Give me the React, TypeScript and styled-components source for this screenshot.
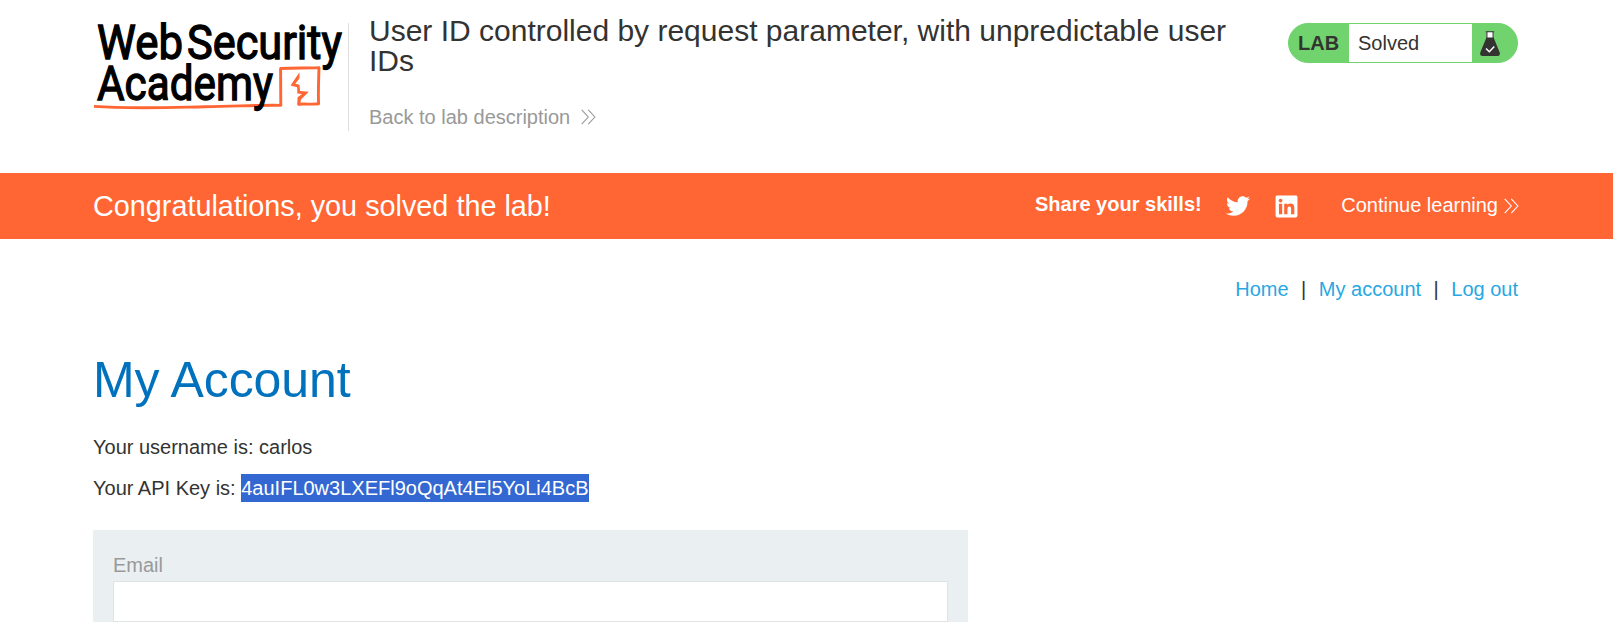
import React from "react";
import styled, { createGlobalStyle } from "styled-components";
import { FaTwitter, FaLinkedin } from "react-icons/fa";

const GlobalStyle = createGlobalStyle`
  * { box-sizing: border-box; }
  html, body { margin: 0; background: #fff; }
  body {
    font-family: "Liberation Sans", Arial, Helvetica, sans-serif;
    font-size: 20px;
    line-height: 23px;
    color: #333332;
    overflow: hidden;
  }
`;

const Page = styled.div`
  height: 622px;
  overflow: hidden;
`;

const Container = styled.div`
  width: 1425px;
  margin: 0 0 0 93px;
`;

const Header = styled(Container)`
  display: flex;
  align-items: flex-start;
  height: 173px;
  padding-top: 23px;
`;

const LogoLink = styled.a`
  display: block;
  width: 256px;
  height: 108px;
  border-right: 1px solid #dedede;
  svg { display: block; overflow: visible; }
`;

const TitleBlock = styled.div`
  width: 880px;
  padding-left: 20px;
`;

const Title = styled.h2`
  margin: -7px 0 0;
  font-size: 30px;
  line-height: 30px;
  font-weight: 400;
`;

const BackLink = styled.a`
  display: flex;
  align-items: center;
  gap: 11px;
  margin-top: 30px;
  color: #999;
  svg { margin-top: -2px; }
`;

const StatusBadge = styled.div`
  display: flex;
  width: 230px;
  height: 40px;
  margin-left: auto;
  border: 1px solid #71d36d;
  border-radius: 20px;
  background: #71d36d;
  overflow: hidden;
  line-height: 38px;
`;

const BadgeLabel = styled.span`
  width: 60px;
  padding-left: 9px;
  font-weight: 700;
  letter-spacing: 0.1px;
`;

const BadgeState = styled.span`
  width: 123px;
  padding-left: 9px;
  background: #fff;
`;

const BadgeIcon = styled.span`
  padding: 7px 0 0 8px;
  svg { display: block; }
`;

const Banner = styled.section`
  height: 66px;
  background: #ff6633;
  color: #fff;
`;

const BannerRow = styled(Container)`
  display: flex;
  align-items: center;
  height: 100%;
`;

const BannerTitle = styled.h4`
  margin: -1px auto 0 0;
  font-size: 28.8px;
  line-height: 32px;
  font-weight: 400;
`;

const Share = styled.div`
  display: flex;
  align-items: center;
  margin-right: 42.5px;
`;

const ShareText = styled.span`
  margin: -3px 24px 0 0;
  font-weight: 700;
`;

const ShareIcon = styled.a<{ $gap?: number }>`
  display: block;
  margin-right: ${(p) => p.$gap ?? 0}px;
  height: 25px;
  svg { display: block; }
`;

const ContinueLink = styled.a`
  display: flex;
  align-items: center;
  gap: 6px;
  margin: -1px -1px 0 0;
  color: #fff;
`;

const Nav = styled(Container)`
  display: flex;
  justify-content: flex-end;
  gap: 12.5px;
  padding-top: 39px;
  height: 111px;
`;

const NavLink = styled.a`
  color: #29a7e1;
`;

const PageTitle = styled.h1`
  margin: 0;
  font-size: 50px;
  line-height: 60px;
  font-weight: 400;
  letter-spacing: -0.1px;
  color: #0071bc;
`;

const Detail = styled.p`
  margin: 0 0 18px;
`;

const Details = styled.div`
  padding: 26px 0 12px;
`;

const Selected = styled.span`
  background: #3367d1;
  color: #fff;
  padding: 3px 0;
`;

const Form = styled.form`
  width: 875px;
  height: 140px;
  padding: 24px 20px 0;
  background: #eaeff2;
`;

const Label = styled.label`
  display: block;
  color: #999;
`;

const Input = styled.input`
  display: block;
  width: 835px;
  height: 41px;
  margin-top: 4px;
  border: 1px solid #e0e3e4;
  background: #fff;
  outline: none;
`;

const Chevrons = () => (
  <svg width="15" height="16" viewBox="0 0 15 16" fill="none" stroke="currentColor" strokeWidth="1.1">
    <path d="M.7.9 7.3 8 .7 15.1M7.3.9 13.9 8 7.3 15.1" />
  </svg>
);

const Logo = () => (
  <svg width="255" height="90" viewBox="93 23 255 90">
    <g
      fill="#000" stroke="#000" strokeWidth="1.3"
      fontFamily="Roboto, sans-serif" fontWeight="400" fontSize="47.4"
    >
      <text x="97" y="58.9" textLength="86" lengthAdjust="spacingAndGlyphs">Web</text>
      <text x="187" y="58.9" textLength="155" lengthAdjust="spacingAndGlyphs">Security</text>
    </g>
    <path
      d="M94 106.4C130 108.9 168 107.5 205 106.8S262 104.9 280.8 105.4L280.6 68.5C294 67.5 306 68.4 319 67.6 318.7 80 318 92 318.6 103.8 312 104.8 305 103.4 298 104.3"
      fill="none" stroke="#ff6633" strokeWidth="2.9" strokeLinejoin="round"
    />
    <path
      d="M299.5 72.2 299.4 78.5 295.3 83.8 299.5 84.8 300 91 308.8 91.8 301 99.5 300 105.2H297.2L297.6 97.2 302 94 297.3 93.6 297.2 87.2 290.5 85.4Z"
      fill="#ff6633"
    />
    <text x="97" y="99.8" textLength="176" lengthAdjust="spacingAndGlyphs"
      fill="#000" stroke="#000" strokeWidth="1.3"
      fontFamily="Roboto, sans-serif" fontWeight="400" fontSize="47.4">Academy</text>
  </svg>
);

const Flask = () => (
  <svg width="20" height="25" viewBox="0 0 20 25">
    <path d="M6.5 1h7v7h-7z" fill="#fff" />
    <path d="M5.8.7h8.4M6.9 1v6M13.1 1v6" stroke="#333332" strokeWidth="1.1" fill="none" />
    <path d="M6.4 6.5h7.2L19.7 21.6Q20.6 25 17.5 25h-15Q-.6 25 .3 21.6Z" fill="#333332" />
    <path d="m6 17.5 3.3 3.2 5-5.2" fill="none" stroke="#fff" strokeWidth="1.5" />
  </svg>
);

export default function App() {
  return (
    <Page>
      <GlobalStyle />
      <Header as="header">
        <LogoLink><Logo /></LogoLink>
        <TitleBlock>
          <Title>User ID controlled by request parameter, with unpredictable user IDs</Title>
          <BackLink>Back to lab description <Chevrons /></BackLink>
        </TitleBlock>
        <StatusBadge>
          <BadgeLabel>LAB</BadgeLabel>
          <BadgeState>Solved</BadgeState>
          <BadgeIcon><Flask /></BadgeIcon>
        </StatusBadge>
      </Header>
      <Banner>
        <BannerRow>
          <BannerTitle>Congratulations, you solved the lab!</BannerTitle>
          <Share>
            <ShareText>Share your skills!</ShareText>
            <ShareIcon $gap={24}><FaTwitter size={24} /></ShareIcon>
            <ShareIcon><FaLinkedin size={25} /></ShareIcon>
          </Share>
          <ContinueLink>Continue learning <Chevrons /></ContinueLink>
        </BannerRow>
      </Banner>
      <Nav as="nav">
        <NavLink>Home</NavLink>
        <span>|</span>
        <NavLink>My account</NavLink>
        <span>|</span>
        <NavLink>Log out</NavLink>
      </Nav>
      <Container>
        <PageTitle>My Account</PageTitle>
        <Details>
          <Detail>Your username is: carlos</Detail>
          <Detail>Your API Key is: <Selected>4auIFL0w3LXEFl9oQqAt4El5YoLi4BcB</Selected></Detail>
        </Details>
        <Form>
          <Label htmlFor="email">Email</Label>
          <Input id="email" type="email" />
        </Form>
      </Container>
    </Page>
  );
}
